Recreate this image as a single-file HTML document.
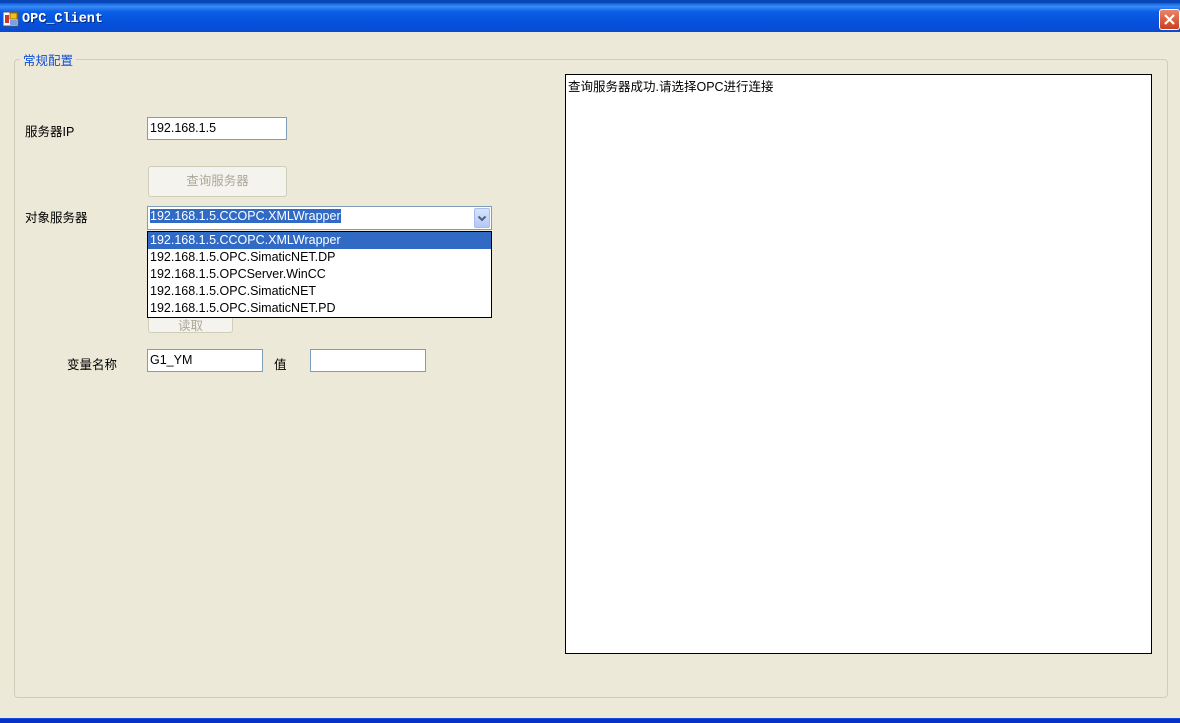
<!DOCTYPE html>
<html><head><meta charset="utf-8"><style>
*{margin:0;padding:0;box-sizing:border-box}
body{width:1180px;height:723px;overflow:hidden;background:#ece9d8;position:relative;font-family:"Liberation Sans","Noto Sans CJK SC",sans-serif;font-size:12.5px;color:#000}
.abs{position:absolute}
#title{left:0;top:0;width:1180px;height:32px;background:linear-gradient(#0a5fd8 0%,#3a8cf7 12%,#0b5ee6 30%,#0550dc 70%,#0a4bd0 100%);border-top:3px solid #0846b8}
#title span{position:absolute;left:22px;top:9px;color:#fff;font-family:"Liberation Mono",monospace;font-weight:bold;font-size:13.5px;text-shadow:1px 1px #0a2a7a}
#close{left:1159px;top:9px;width:21px;height:21px;background:linear-gradient(#e8856a,#c8401f);border:1px solid #fff;border-radius:3px}
#bottom{left:0;top:718px;width:1180px;height:5px;background:#0831c8;border-top:1px solid #1a4ae0}
#group{left:14px;top:59px;width:1154px;height:639px;border:1px solid #d0cdb8;border-radius:4px}
#legend{left:20px;top:50px;background:#ece9d8;padding:0 3px;color:#1050d8;font-size:12.5px}
.tb{background:#fff;border:1px solid #7f9db9;height:23px;padding:3px 2px}
.btn{border:1px solid #d0cdb8;border-radius:3px;background:#f4f3ee;color:#aca899;text-align:center;line-height:28px}
#log{left:565px;top:74px;width:587px;height:580px;background:#fff;border:1px solid #000;padding:1px 2px}
#list{left:147px;top:231px;width:345px;height:87px;background:#fff;border:1px solid #000}
#list div{height:17px;line-height:17px;padding-left:2px}
</style></head><body>
<div id="title" class="abs">
<svg class="abs" style="left:3px;top:8px" width="16" height="16"><rect x="0" y="1" width="15" height="14" fill="#fff" stroke="#555"/><rect x="2" y="4" width="4" height="8" fill="#c33"/><rect x="7" y="2" width="7" height="6" fill="#f0c020" stroke="#a07000"/><rect x="7" y="9" width="7" height="5" fill="#7aa0e0"/></svg>
<span>OPC_Client</span>
</div>
<div id="close" class="abs"><svg width="19" height="19"><path d="M5 5L14 14M14 5L5 14" stroke="#fff" stroke-width="2.2"/></svg></div>
<div id="group" class="abs"></div>
<div id="legend" class="abs">常规配置</div>
<div class="abs" style="left:25px;top:121px">服务器IP</div>
<div class="abs tb" style="left:147px;top:117px;width:140px">192.168.1.5</div>
<div class="abs btn" style="left:148px;top:166px;width:139px;height:31px">查询服务器</div>
<div class="abs" style="left:25px;top:207px">对象服务器</div>
<div class="abs tb" style="left:147px;top:206px;width:345px;height:24px;padding:2px"><span style="background:#316ac5;color:#fff">192.168.1.5.CCOPC.XMLWrapper</span></div>
<div class="abs" style="left:474px;top:208px;width:16px;height:20px;background:linear-gradient(#d8e4fc,#b4c8f4);border:1px solid #a8bde8;border-radius:2px"><svg width="14" height="18"><path d="M3.5 7.5L7 11L10.5 7.5" stroke="#4d6185" stroke-width="2" fill="none"/></svg></div>
<div class="abs btn" style="left:148px;top:305px;width:85px;height:28px;line-height:40px">读取</div>
<div id="list" class="abs">
<div style="background:#316ac5;color:#fff">192.168.1.5.CCOPC.XMLWrapper</div>
<div>192.168.1.5.OPC.SimaticNET.DP</div>
<div>192.168.1.5.OPCServer.WinCC</div>
<div>192.168.1.5.OPC.SimaticNET</div>
<div>192.168.1.5.OPC.SimaticNET.PD</div>
</div>
<div class="abs" style="left:67px;top:354px">变量名称</div>
<div class="abs tb" style="left:147px;top:349px;width:116px">G1_YM</div>
<div class="abs" style="left:274px;top:354px">值</div>
<div class="abs tb" style="left:310px;top:349px;width:116px"></div>
<div id="log" class="abs">查询服务器成功.请选择OPC进行连接</div>
<div id="bottom" class="abs"></div>
</body></html>
